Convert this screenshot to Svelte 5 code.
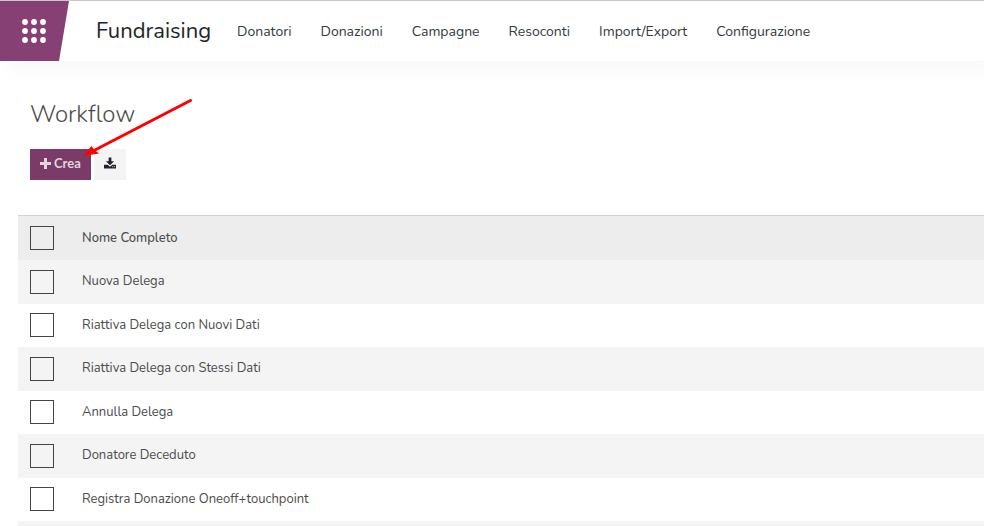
<script>
  const menu = ['Donatori', 'Donazioni', 'Campagne', 'Resoconti', 'Import/Export', 'Configurazione'];

  const workflows = [
    'Nuova Delega',
    'Riattiva Delega con Nuovi Dati',
    'Riattiva Delega con Stessi Dati',
    'Annulla Delega',
    'Donatore Deceduto',
    'Registra Donazione Oneoff+touchpoint'
  ];

  const dots = [0, 9, 18];

  let selected = $state(workflows.map(() => false));
  let allSelected = $derived(selected.every(Boolean));

  function toggleAll(event) {
    const checked = event.currentTarget.checked;
    selected = workflows.map(() => checked);
  }
</script>

<div class="app">
  <header class="topbar">
    <button class="apps" type="button" aria-label="Applicazioni">
      <svg width="24" height="24" viewBox="0 0 24 24" aria-hidden="true">
        {#each dots as y}
          {#each dots as x}
            <circle cx={x + 3} cy={y + 3} r="2.9" fill="#fff" />
          {/each}
        {/each}
      </svg>
    </button>
    <a class="brand" href="#home">Fundraising</a>
    <nav class="menu">
      {#each menu as item}
        <a href="#{item}">{item}</a>
      {/each}
    </nav>
  </header>

  <main>
    <div class="control-panel">
      <h1>Workflow</h1>
      <div class="actions">
        <button class="btn primary" type="button">
          <svg width="11" height="11" viewBox="0 0 11 11" aria-hidden="true">
            <path d="M4 0h3v4h4v3H7v4H4V7H0V4h4z" fill="currentColor" />
          </svg>
          Crea
        </button>
        <button class="btn export" type="button" aria-label="Esporta">
          <svg width="12" height="12" viewBox="0 0 13 12" aria-hidden="true">
            <path d="M5 0h3v4h3L6.500 8.500 2 4h3z" fill="currentColor" />
            <path d="M0 8h4l2.500 2L9 8h4v4H0z" fill="currentColor" />
            <path d="M9 10h1M11 10h1" stroke="#f4f4f4" />
          </svg>
        </button>
        <svg class="pointer" width="112" height="60" viewBox="0 0 112 60" aria-hidden="true">
          <path d="M109.500 3.500L14 53" stroke="#f00" stroke-width="3" stroke-linecap="round" />
          <path d="M2 59L10.500 49L13.500 53L18 56.500z" fill="#f00" />
        </svg>
      </div>
    </div>

    <table>
      <thead>
        <tr>
          <th class="check">
            <input type="checkbox" aria-label="Seleziona tutto" checked={allSelected} onchange={toggleAll} />
          </th>
          <th>Nome Completo</th>
        </tr>
      </thead>
      <tbody>
        {#each workflows as name, i}
          <tr>
            <td class="check">
              <input id="wf-{i}" type="checkbox" bind:checked={selected[i]} />
            </td>
            <td><label for="wf-{i}">{name}</label></td>
          </tr>
        {/each}
        <tr>
          <td colspan="2"></td>
        </tr>
      </tbody>
    </table>
  </main>
</div>

<style>
  :global(body) {
    margin: 0;
    background: #fff;
  }

  .app {
    height: 100vh;
    overflow: hidden;
    font-family: Nunito, "Open Sans", "Noto Sans", sans-serif;
    font-size: 13px;
    color: #4c4c4c;
  }

  .topbar {
    display: flex;
    align-items: center;
    height: 60px;
    border-top: 1px solid #c8c8c8;
    background: #fff;
    box-shadow: 10px 10px 20px rgba(0, 0, 0, 0.03);
  }

  .apps {
    display: flex;
    align-items: center;
    width: 69px;
    height: 60px;
    padding: 0 0 0 22px;
    border: 0;
    background: #864074;
    clip-path: polygon(0 0, 100% 0, 59px 100%, 0 100%);
    cursor: pointer;
  }

  .brand {
    margin-left: 27px;
    font-size: 22px;
    line-height: 28px;
    color: #212529;
    text-decoration: none;
  }

  .menu {
    display: flex;
    gap: 29px;
    margin-left: 26px;
    padding-top: 2px;
  }

  .menu a {
    font-size: 14px;
    line-height: 20px;
    color: #343a40;
    text-decoration: none;
  }

  .control-panel {
    padding: 36px 30px 35px;
  }

  h1 {
    margin: 0;
    font-size: 24px;
    font-weight: 300;
    line-height: 34px;
    color: #4c4c4c;
  }

  .actions {
    display: flex;
    gap: 3px;
    position: relative;
    margin-top: 18px;
  }

  .btn {
    display: flex;
    align-items: center;
    justify-content: center;
    gap: 3px;
    height: 31px;
    padding: 0 10px 3px;
    border: 0;
    font-family: Lato, sans-serif;
    font-size: 13px;
    font-weight: 700;
    cursor: pointer;
  }

  .primary {
    background: #7a3b69;
    color: #e0d4dd;
  }

  .export {
    background: #f4f4f4;
    color: #212529;
  }

  .pointer {
    position: absolute;
    left: 51px;
    bottom: 23px;
    fill: none;
    pointer-events: none;
  }

  table {
    width: calc(100% - 18px);
    margin-left: 18px;
    border-collapse: collapse;
    border-spacing: 0;
  }

  th,
  td {
    box-sizing: border-box;
    height: 43px;
    padding: 0 0 2px;
    line-height: 18px;
    text-align: left;
    vertical-align: middle;
  }

  thead tr {
    background: #ededed;
    box-shadow: inset 0 1px #cfd3d1;
  }

  th {
    height: 45px;
    padding: 0;
    font-weight: 500;
    color: #4c4c4c;
  }

  tbody tr:nth-child(odd) {
    background: #f4f4f4;
  }

  tbody tr:nth-child(odd) td {
    height: 44px;
  }

  .check {
    width: 64px;
    padding: 0 0 0 12px;
  }

  tbody tr:nth-child(even) .check {
    padding-bottom: 1px;
  }

  input[type='checkbox'] {
    display: block;
    box-sizing: border-box;
    width: 24px;
    height: 24px;
    margin: 0;
    border: 1px solid #444;
    appearance: none;
  }

  input[type='checkbox']:checked {
    background: #7a3b69;
  }
</style>
